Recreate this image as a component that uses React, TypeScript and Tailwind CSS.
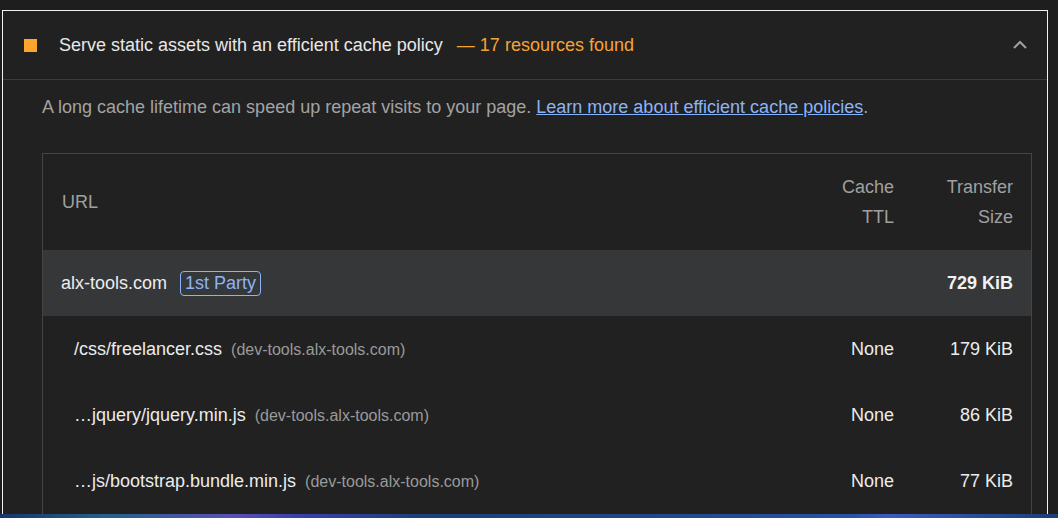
import React from "react";

const rows = [
  { path: "/css/freelancer.css", host: "(dev-tools.alx-tools.com)", ttl: "None", size: "179 KiB" },
  { path: "…jquery/jquery.min.js", host: "(dev-tools.alx-tools.com)", ttl: "None", size: "86 KiB" },
  { path: "…js/bootstrap.bundle.min.js", host: "(dev-tools.alx-tools.com)", ttl: "None", size: "77 KiB" },
];

const App = () => {
  return (
    <div className="w-[1058px] h-[518px] overflow-hidden bg-[#1e1e1e] flex flex-col font-['Liberation_Sans',Arial,sans-serif] text-[18px]">
      <div className="flex-1 pt-[10px] pl-[2px] flex min-h-0">
        <div className="w-[1046px] border border-b-0 border-[#f2f2f2] bg-[#212121] flex flex-col min-h-0">
          <div className="h-[69px] shrink-0 flex items-center pl-[21px] pr-[19px] border-b border-[#3c3c3c]">
            <span className="w-[13px] h-[13px] bg-[#ffa42e] shrink-0" />
            <span className="ml-[22px] text-[#e8e8e8]">Serve static assets with an efficient cache policy</span>
            <span className="ml-[14px] text-[#f5a431]">— 17 resources found</span>
            <svg className="ml-auto" width="16" height="10" viewBox="0 0 16 10">
              <path d="M2 8 L8 2 L14 8" fill="none" stroke="#a0a0a0" strokeWidth="2" />
            </svg>
          </div>
          <div className="pl-[39px] pr-[15px] pt-[14px] flex flex-col min-h-0">
            <p className="leading-[26px] text-[#a3a3a3]">
              A long cache lifetime can speed up repeat visits to your page.{" "}
              <a className="text-[#8ab4f8] underline" href="#">Learn more about efficient cache policies</a>.
            </p>
            <div className="mt-[33px] border border-b-0 border-[#444] w-[990px]">
              <div className="h-[96px] grid grid-cols-[1fr_100px_119px] items-center pl-[19px] pr-[18px] text-[#a0a0a0] leading-[30px]">
                <span>URL</span>
                <span className="text-right">Cache<br />TTL</span>
                <span className="text-right">Transfer<br />Size</span>
              </div>
              <div className="h-[66px] bg-[#363739] grid grid-cols-[1fr_100px_119px] items-center pl-[18px] pr-[18px]">
                <div className="flex items-center">
                  <span className="text-[#ececec]">alx-tools.com</span>
                  <span className="ml-[13px] px-[4px] h-[25px] leading-[23px] border border-[#8ab4f8] rounded-[4px] text-[#8ab4f8]">1st Party</span>
                </div>
                <span />
                <span className="text-right font-bold text-[#f2f2f2]">729 KiB</span>
              </div>
              {rows.map((r) => (
                <div key={r.path} className="h-[66px] grid grid-cols-[1fr_100px_119px] items-center pl-[31px] pr-[18px]">
                  <div className="flex items-baseline">
                    <span className="text-[#ececec]">{r.path}</span>
                    <span className="ml-[9px] text-[16px] text-[#9a9a9a]">{r.host}</span>
                  </div>
                  <span className="text-right text-[#ececec]">{r.ttl}</span>
                  <span className="text-right text-[#ececec]">{r.size}</span>
                </div>
              ))}
            </div>
          </div>
        </div>
      </div>
      <div className="h-[4px] shrink-0 bg-[linear-gradient(90deg,#17376a,#24618a_10%,#5a4fb8_22%,#3a3fb0_28%,#1d3f7a_40%,#1f4786_60%,#2a50a8_80%,#3a5cc0_84%,#1d3d7a)]" />
    </div>
  );
};

export default App;
